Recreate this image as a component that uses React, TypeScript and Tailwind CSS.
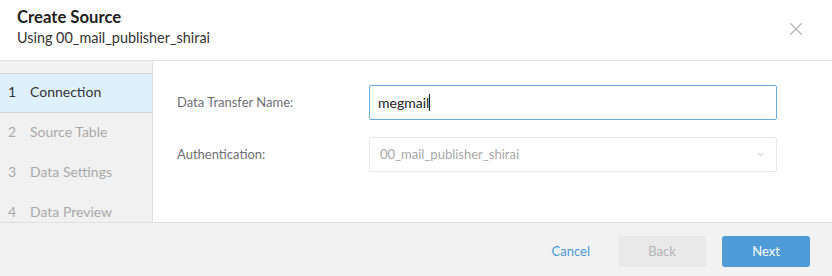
import { ChevronDown, X } from "lucide-react"

const steps = ["Connection", "Source Table", "Data Settings", "Data Preview"]

export default function App() {
  return (
    <div className="w-[832px] h-[276px] bg-white flex flex-col overflow-hidden" style={{ fontFamily: "Lato, 'Open Sans', sans-serif" }}>
      <div className="h-[61px] shrink-0 border-b border-[#e3e3e3] flex items-start justify-between pl-[17px] pr-[25px]">
        <div className="pt-[7px]">
          <h1 className="text-[16.7px] leading-[21px] font-bold text-[#222]">Create Source</h1>
          <p className="text-[14.4px] leading-[20px] text-[#333]">Using 00_mail_publisher_shirai</p>
        </div>
        <button className="mt-[18px] text-[#b5b5b5]" aria-label="Close">
          <X size={22} strokeWidth={1.2} />
        </button>
      </div>

      <div className="flex flex-1 min-h-0">
        <div className="w-[153px] shrink-0 bg-[#f1f1f1] border-r border-[#e0e0e0] pt-[12px] overflow-hidden">
          {steps.map((s, i) => (
            <div
              key={s}
              className={
                i === 0
                  ? "h-[40px] flex items-center px-[8px] pb-[3px] text-[14px] text-[#333] bg-[#dff0fd] border-y border-[#d6d6d6]"
                  : "h-[40px] flex items-center px-[8px] pb-[3px] text-[14px] text-[#a9a9a9]"
              }
            >
              <span className="w-[22px]">{i + 1}</span>
              <span>{s}</span>
            </div>
          ))}
        </div>

        <div className="flex-1 pt-[24px] pl-[24px] pr-[55px] flex flex-col gap-[17px]">
          <div className="flex items-center">
            <label className="w-[192px] text-[13px] text-[#6f6f75]">Data Transfer Name:</label>
            <div className="flex-1 h-[35px] border border-[#6aade3] rounded-[2px] flex items-center px-[8px] text-[14px] text-[#222]">
              megmail<span className="w-px h-[17px] bg-[#222]" />
            </div>
          </div>
          <div className="flex items-center">
            <label className="w-[192px] text-[13px] text-[#6f6f75]">Authentication:</label>
            <div className="flex-1 h-[35px] border border-[#e8e8e8] rounded-[2px] flex items-center justify-between pl-[10px] pr-[10px] text-[13px] text-[#a8a8a8]">
              <span>00_mail_publisher_shirai</span>
              <ChevronDown size={11} strokeWidth={1.3} className="text-[#999]" />
            </div>
          </div>
        </div>
      </div>

      <div className="h-[54px] shrink-0 bg-[#f2f2f2] border-t border-[#e0e0e0] flex items-start justify-end pt-[13px] pr-[22px] gap-[16px]">
        <button className="h-[31px] text-[13px] text-[#4a9ad6] mr-[12px]">Cancel</button>
        <button className="w-[88px] h-[31px] rounded-[3px] bg-[#e9e9e9] text-[13px] text-[#b3b3b3]">Back</button>
        <button className="w-[88px] h-[31px] rounded-[3px] bg-[#4f9bd8] text-[13px] text-white">Next</button>
      </div>
    </div>
  )
}
